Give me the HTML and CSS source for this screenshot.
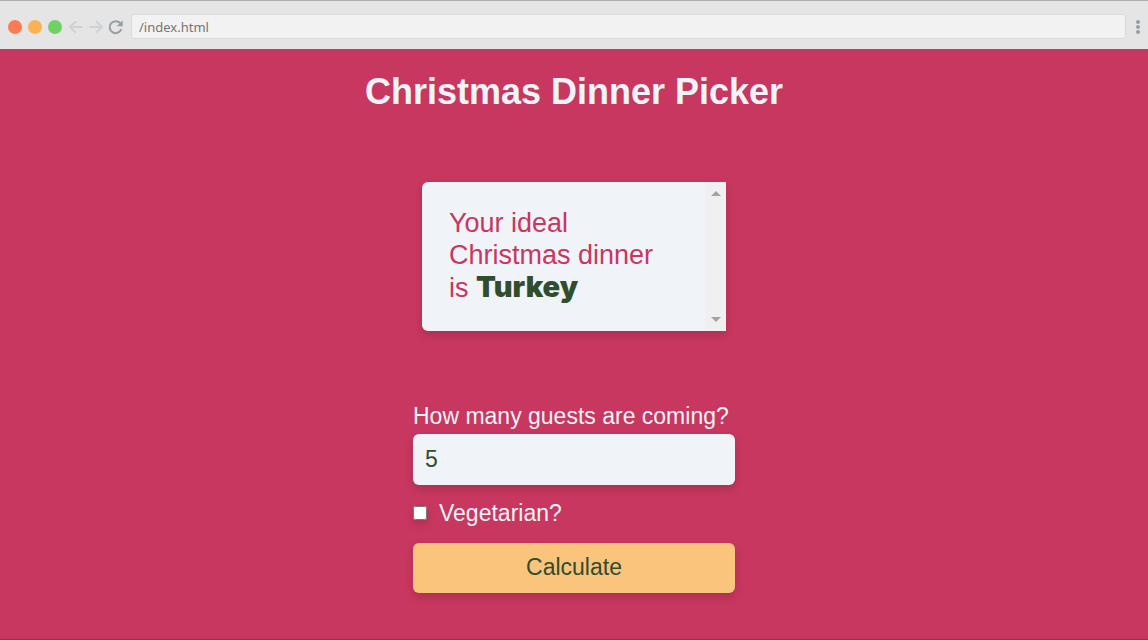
FILE: index.html
```html
<!DOCTYPE html>
<html lang="en">
<head>
<meta charset="utf-8">
<title>Christmas Dinner Picker</title>
<link rel="stylesheet" href="styles.css">
</head>
<body>
<header class="bar">
  <div class="lights"><span class="light red"></span><span class="light amber"></span><span class="light green"></span></div>
  <nav class="nav">
    <button class="icon-button" type="button" aria-label="Back"><svg class="icon faint" viewBox="0 0 16 16"><path d="M14.500 8H2M8 2.200L2 8l6 5.800"/></svg></button>
    <button class="icon-button" type="button" aria-label="Forward"><svg class="icon faint" viewBox="0 0 16 16"><path d="M1.500 8H14M8 2.200L14 8l-6 5.800"/></svg></button>
    <button class="icon-button" type="button" aria-label="Reload"><svg class="icon reload" viewBox="0 0 16 16"><path d="M13.300 10.200A6 6 0 1 1 12.200 4.200"/><path class="solid" d="M14.700 1.200V7.200H8.700Z"/></svg></button>
  </nav>
  <input class="address" type="text" value="/index.html" aria-label="Address">
  <button class="icon-button menu" type="button" aria-label="Menu"><svg class="dots" viewBox="0 0 4 14"><circle cx="2" cy="2" r="2"/><circle cx="2" cy="7" r="2"/><circle cx="2" cy="12" r="2"/></svg></button>
</header>
<main class="page">
  <h1 class="title">Christmas Dinner Picker</h1>
  <section class="result">
    <p class="message">Your ideal Christmas dinner is <strong class="dinner">Turkey</strong></p>
    <div class="scrollbar">
      <button class="icon-button" type="button" aria-label="Scroll up"><svg class="arrow" viewBox="0 0 10 5"><path d="M0 5L5 0l5 5Z"/></svg></button>
      <button class="icon-button" type="button" aria-label="Scroll down"><svg class="arrow" viewBox="0 0 10 5"><path d="M0 0L5 5l5-5Z"/></svg></button>
    </div>
  </section>
  <form class="form">
    <label class="label" for="guests">How many guests are coming?</label>
    <input class="guests" id="guests" type="text" inputmode="numeric" value="5">
    <div class="option">
      <input class="check" id="vegetarian" type="checkbox">
      <label for="vegetarian">Vegetarian?</label>
    </div>
    <button class="calculate" type="button">Calculate</button>
  </form>
</main>
</body>
</html>
```
FILE: styles.css
```css
* {
  box-sizing: border-box;
}

body {
  margin: 0;
  min-height: 100vh;
  display: flex;
  flex-direction: column;
  background: #c8375f;
  color: #f0f3f7;
  font-family: "Liberation Sans", Arial, sans-serif;
}

.bar {
  display: flex;
  align-items: center;
  padding: 13px 8px 10px;
  border-top: 1px solid #adadad;
  background: #e5e5e5;
}

.lights {
  display: flex;
  gap: 6px;
}

.light {
  width: 14px;
  height: 14px;
  border-radius: 50%;
}

.red {
  background: #fc7b52;
}

.amber {
  background: #fbb251;
}

.green {
  background: #70d165;
}

.nav {
  display: flex;
  gap: 4px;
  margin: 0 7px 0 6px;
}

.icon-button {
  display: flex;
  padding: 0;
  border: 0;
  background: none;
}

.icon {
  width: 16px;
  height: 16px;
  fill: none;
  stroke: #949fa6;
  stroke-width: 2;
}

.faint {
  stroke: #ced2d4;
}

.solid {
  fill: #949fa6;
  stroke: none;
}

.address {
  flex: 1;
  min-width: 0;
  height: 25px;
  padding: 0 7px;
  border: 1px solid #dbdbdb;
  border-radius: 3px;
  background: #f2f2f2;
  color: #757575;
  font: 13px "Noto Sans", "Open Sans", sans-serif;
}

.menu {
  margin-left: 10px;
}

.dots {
  width: 4px;
  height: 14px;
  fill: #949fa6;
}

.page {
  flex: 1;
  display: flex;
  flex-direction: column;
  align-items: center;
  padding: 22px 16px 40px;
  border-bottom: 1px solid #7d3e55;
}

.title {
  margin: 0 0 70px;
  font-size: 36px;
  line-height: 41px;
}

.result {
  display: flex;
  width: 304px;
  max-width: 100%;
  border-radius: 6px 0 0 6px;
  background: #f0f3f7;
  box-shadow: 0 4px 8px rgba(0, 0, 0, 0.15);
}

.message {
  flex: 1;
  margin: 0;
  padding: 25px 27px 27px;
  color: #c8375f;
  font-size: 27px;
  line-height: 32px;
}

.dinner {
  color: #304d2d;
  font-family: Inter, sans-serif;
  font-size: 29px;
  font-weight: 900;
}

.scrollbar {
  display: flex;
  flex-direction: column;
  justify-content: space-between;
  align-items: center;
  width: 21px;
  padding: 9px 0;
  background: #f0f0f0;
}

.arrow {
  width: 10px;
  height: 5px;
  fill: #a3a3a3;
}

.form {
  display: flex;
  flex-direction: column;
  width: 322px;
  max-width: 100%;
  margin-top: 70px;
  font-size: 23px;
  line-height: 30px;
}

.label {
  margin-bottom: 3px;
}

.guests,
.calculate {
  width: 100%;
  height: 51px;
  padding: 0 12px;
  border: 0;
  border-radius: 6px;
  color: #304d2d;
  font: inherit;
  box-shadow: 0 4px 8px rgba(0, 0, 0, 0.15);
}

.guests {
  background: #f0f3f7;
}

.option {
  display: flex;
  align-items: center;
  gap: 12px;
  margin: 13px 0 15px;
}

.check {
  width: 14px;
  height: 14px;
  margin: 0;
  box-shadow: 0 4px 8px rgba(0, 0, 0, 0.15);
}

.calculate {
  height: 50px;
  padding-bottom: 2px;
  background: #fac47d;
}
```
